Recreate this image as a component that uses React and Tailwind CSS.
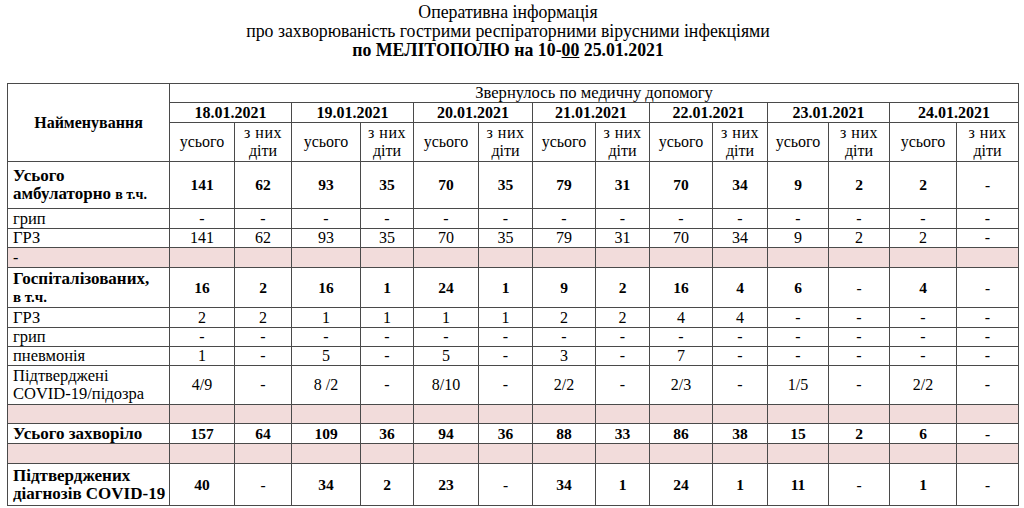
import React from "react";

const dates = ["18.01.2021", "19.01.2021", "20.01.2021", "21.01.2021", "22.01.2021", "23.01.2021", "24.01.2021"];
const widths = [162, 65, 57, 69, 53, 65, 54, 63, 54, 63, 55, 61, 61, 67, 62];

const D = Array(14).fill("-");

const rows = [
  { type: "main", h: 47, label: (<><div>Усього</div><div>амбулаторно <span className="text-[14px]">в т.ч.</span></div></>), bold: true, vals: ["141","62","93","35","70","35","79","31","70","34","9","2","2","-"] },
  { h: 20, label: "грип", vals: D },
  { h: 19, label: "ГРЗ", vals: ["141","62","93","35","70","35","79","31","70","34","9","2","2","-"] },
  { type: "pink", h: 20, label: "-" },
  { type: "main", h: 40, label: (<><div>Госпіталізованих,</div><div className="text-[15px]">в т.ч.</div></>), bold: true, vals: ["16","2","16","1","24","1","9","2","16","4","6","-","4","-"] },
  { h: 20, label: "ГРЗ", vals: ["2","2","1","1","1","1","2","2","4","4","-","-","-","-"] },
  { h: 19, label: "грип", vals: D },
  { h: 19, label: "пневмонія", vals: ["1","-","5","-","5","-","3","-","7","-","-","-","-","-"] },
  { h: 39, label: (<><div>Підтверджені</div><div>COVID-19/підозра</div></>), vals: ["4/9","-","8 /2","-","8/10","-","2/2","-","2/3","-","1/5","-","2/2","-"] },
  { type: "pink", h: 19, label: "" },
  { type: "main", h: 20, label: "Усього захворіло", bold: true, vals: ["157","64","109","36","94","36","88","33","86","38","15","2","6","-"] },
  { type: "pink", h: 20, label: "" },
  { type: "main", h: 42, label: (<><div>Підтверджених</div><div>діагнозів COVID-19</div></>), bold: true, vals: ["40","-","34","2","23","-","34","1","24","1","11","-","1","-"] },
];

const cell = "border border-[#4a4a4a] p-0";

export default function App() {
  return (
    <div className="w-[1024px] h-[508px] bg-white text-black overflow-hidden" style={{ fontFamily: '"Liberation Serif", "Times New Roman", serif' }}>
      <div className="flex flex-col items-center pt-[3px] pr-[8px] text-[17.8px] leading-[19px]">
        <div>Оперативна інформація</div>
        <div>про захворюваність гострими респіраторними вірусними інфекціями</div>
        <div className="font-bold">по МЕЛІТОПОЛЮ на 10-<span className="underline">00</span> 25.01.2021</div>
      </div>
      <table className="mt-[23px] ml-[7px] w-[1011px] table-fixed border-collapse text-[16px] leading-[18px]">
        <colgroup>
          {widths.map((w, i) => (
            <col key={i} style={{ width: w }} />
          ))}
        </colgroup>
        <tbody>
          <tr className="h-[19px]">
            <td rowSpan={3} className={`${cell} text-center font-bold`}>Найменування</td>
            <td colSpan={14} className={`${cell} text-center text-[16.6px]`}>Звернулось по медичну допомогу</td>
          </tr>
          <tr className="h-[20px]">
            {dates.map((d) => (
              <td key={d} colSpan={2} className={`${cell} text-center font-bold`}>{d}</td>
            ))}
          </tr>
          <tr className="h-[39px]">
            {dates.map((d) => (
              <React.Fragment key={d}>
                <td className={`${cell} text-center`}>усього</td>
                <td className={`${cell} text-center`}>
                  <div className="tracking-[0.5px]">з них</div>
                  <div>діти</div>
                </td>
              </React.Fragment>
            ))}
          </tr>
          {rows.map((r, i) => {
            if (r.type === "pink") {
              return (
                <tr key={i} style={{ height: r.h }} className="bg-[#f2dcdb]">
                  <td className={`${cell} pl-[5px] text-left`}>{r.label}</td>
                  {Array.from({ length: 14 }).map((_, j) => (
                    <td key={j} className={cell}></td>
                  ))}
                </tr>
              );
            }
            return (
              <tr key={i} style={{ height: r.h }}>
                <td className={`${cell} pl-[5px] text-left ${r.bold ? "font-bold text-[17px]" : "text-[16.5px]"}`}>{r.label}</td>
                {r.vals.map((v, j) => (
                  <td key={j} className={`${cell} text-center ${r.bold ? "font-bold text-[15.5px]" : ""}`}>{v}</td>
                ))}
              </tr>
            );
          })}
        </tbody>
      </table>
    </div>
  );
}
